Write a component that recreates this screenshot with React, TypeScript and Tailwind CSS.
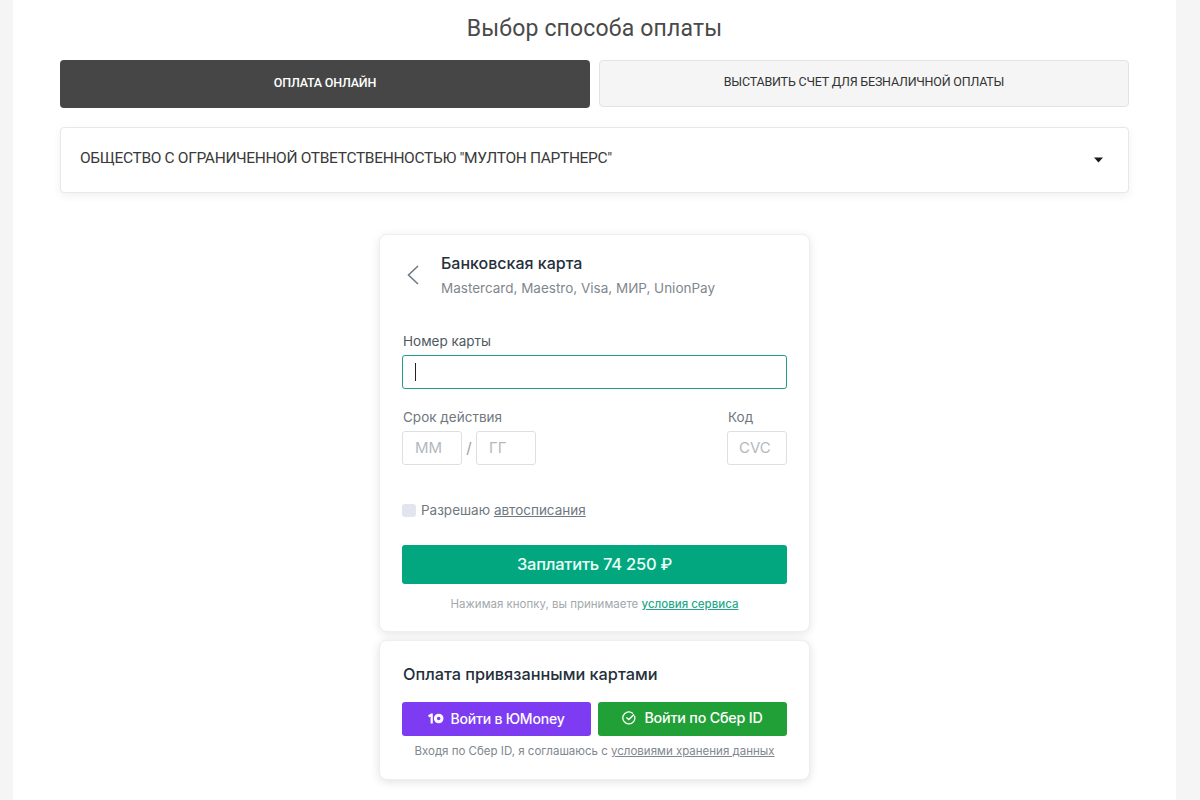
// App.tsx
const roboto = { fontFamily: 'Roboto, sans-serif' };

function YooIcon() {
  return (
    <svg width="16" height="11" viewBox="0 0 16 11" fill="none">
      <path d="M0 2.6 L3 0.6 H4.800 V10.400 H2.600 V3.600 L1.200 4.500 Z" fill="#fff" />
      <circle cx="10.700" cy="5.500" r="3.300" stroke="#fff" strokeWidth="3" />
    </svg>
  );
}

function SberIcon() {
  return (
    <svg width="14" height="14" viewBox="0 0 14 14" fill="none">
      <path
        d="M12.600 5.200 A6 6 0 1 1 10.600 2.200"
        stroke="#fff"
        strokeWidth="1.300"
        strokeLinecap="round"
      />
      <path d="M4.400 6.400 L6.800 8.600 L12 3.600" stroke="#fff" strokeWidth="1.400" />
    </svg>
  );
}

export default function App() {
  return (
    <div className="h-[800px] overflow-hidden bg-[#f5f5f5] pl-[13px]">
      <div className="h-[800px] w-[1163px] bg-white px-[47px]">
        <h1
          className="flex h-[60px] items-center justify-center pb-[4px] text-[23px] leading-none tracking-[0.17px] text-[#4a4a4a]"
          style={roboto}
        >
          Выбор способа оплаты
        </h1>

        <div className="flex gap-[9px]" style={roboto}>
          <button className="flex h-[48px] w-[530px] items-center justify-center rounded-[4px] bg-[#464646] pb-[2px] text-[12.5px] font-medium tracking-[-0.2px] text-white">
            ОПЛАТА ОНЛАЙН
          </button>
          <button className="flex h-[47px] w-[530px] items-center justify-center rounded-[4px] border border-[#e3e3e3] bg-[#f5f5f5] pb-[2px] text-[12.5px] tracking-[-0.2px] text-[#333]">
            ВЫСТАВИТЬ СЧЕТ ДЛЯ БЕЗНАЛИЧНОЙ ОПЛАТЫ
          </button>
        </div>

        <div
          className="mt-[19px] flex h-[66px] w-[1069px] items-center justify-between rounded-[4px] border border-[#e8e8e8] bg-white pl-[19px] pr-[25px] shadow-[0_3px_10px_rgba(0,0,0,0.06)]"
          style={roboto}
        >
          <span className="pb-[3px] text-[15.5px] tracking-[-0.33px] text-[#3a3a3a]">
            ОБЩЕСТВО С ОГРАНИЧЕННОЙ ОТВЕТСТВЕННОСТЬЮ "МУЛТОН ПАРТНЕРС"
          </span>
          <svg width="9" height="6" viewBox="0 0 9 6">
            <path d="M0 0.500 H9 L4.500 5.500 Z" fill="#1a1a1a" />
          </svg>
        </div>

        <div className="ml-[319px] mt-[41px] w-[431px] font-['Inter',sans-serif]">
          <div className="h-[398px] rounded-[8px] border border-[#eeeeee] bg-white px-[22px] shadow-[0_2px_10px_rgba(0,0,0,0.1)]">
            <div className="flex h-[98px] pt-[17px]">
              <svg width="39" height="46" viewBox="0 0 39 46" fill="none" className="shrink-0">
                <path d="M16 14 L6.500 23 L16 32" stroke="#6f7b84" strokeWidth="1.600" />
              </svg>
              <div>
                <div className="text-[16px] font-medium leading-[22px] text-[#25303c]">
                  Банковская карта
                </div>
                <div className="mt-[4px] text-[13.5px] leading-[20px] text-[#7f878e]">
                  Mastercard, Maestro, Visa, МИР, UnionPay
                </div>
              </div>
            </div>

            <div className="pl-px text-[13.5px] leading-[16px] text-[#4e5962]">Номер карты</div>
            <div className="mt-[6px] flex h-[34px] w-[385px] items-center rounded-[3px] border border-[#1f9d82] pl-[12px]">
              <div className="h-[18px] w-px bg-[#222]" />
            </div>

            <div className="mt-[20px] flex w-[385px] justify-between">
              <div>
                <div className="pl-px text-[13.5px] leading-[16px] text-[#6f7880]">Срок действия</div>
                <div className="mt-[6px] flex items-center text-[15px] text-[#b3b8bd]">
                  <div className="flex h-[34px] w-[60px] items-center rounded-[3px] border border-[#dde0e3] pl-[12px]">
                    ММ
                  </div>
                  <span className="w-[14px] text-center text-[#9aa0a6]">/</span>
                  <div className="flex h-[34px] w-[60px] items-center rounded-[3px] border border-[#dde0e3] pl-[12px]">
                    ГГ
                  </div>
                </div>
              </div>
              <div>
                <div className="pl-px text-[13.5px] leading-[16px] text-[#6f7880]">Код</div>
                <div className="mt-[6px] flex h-[34px] w-[60px] items-center rounded-[3px] border border-[#dde0e3] pl-[11px] text-[15px] text-[#b3b8bd]">
                  CVC
                </div>
              </div>
            </div>

            <div className="mt-[35px] flex items-center gap-[5px] pb-[2px] text-[13.5px] leading-[20px] text-[#6f7880]">
              <div className="h-[13px] w-[14px] rounded-[3px] bg-[#e2e5ef]" />
              <span>
                Разрешаю <span className="underline">автосписания</span>
              </span>
            </div>

            <button className="mt-[23px] flex h-[39px] w-[385px] items-center justify-center rounded-[3px] bg-[#03a77f] text-[16.5px] font-medium tracking-[-0.25px] text-[#e8fff7]">
              Заплатить 74 250 ₽
            </button>

            <div className="mt-[12px] w-[385px] text-center text-[11.5px] leading-[16px] text-[#a4a9ad]">
              Нажимая кнопку, вы принимаете{' '}
              <span className="font-medium text-[#1fa98a] underline">условия сервиса</span>
            </div>
          </div>

          <div className="mt-[8px] h-[140px] rounded-[8px] border border-[#eeeeee] bg-white px-[22px] shadow-[0_2px_10px_rgba(0,0,0,0.12)]">
            <div className="pl-px pt-[22px] text-[16.3px] font-medium leading-[22px] text-[#25303c]">
              Оплата привязанными картами
            </div>
            <div className="mt-[17px] flex w-[385px] gap-[7px]">
              <button className="flex h-[34px] w-[189px] items-center justify-center gap-[6px] rounded-[3px] bg-[#7d3cf2] pb-[2px] text-[14px] font-medium tracking-[-0.2px] text-white">
                <YooIcon />
                Войти в ЮMoney
              </button>
              <button className="flex h-[34px] w-[189px] items-center justify-center gap-[8px] rounded-[3px] bg-[#21a038] pb-[2px] text-[14.3px] font-medium tracking-[-0.2px] text-white">
                <SberIcon />
                Войти по Сбер ID
              </button>
            </div>
            <div className="mt-[7px] w-[385px] text-center text-[11.5px] leading-[16px] text-[#80878e]">
              Входя по Сбер ID, я соглашаюсь с{' '}
              <span className="underline">условиями хранения данных</span>
            </div>
          </div>
        </div>
      </div>
    </div>
  );
}
